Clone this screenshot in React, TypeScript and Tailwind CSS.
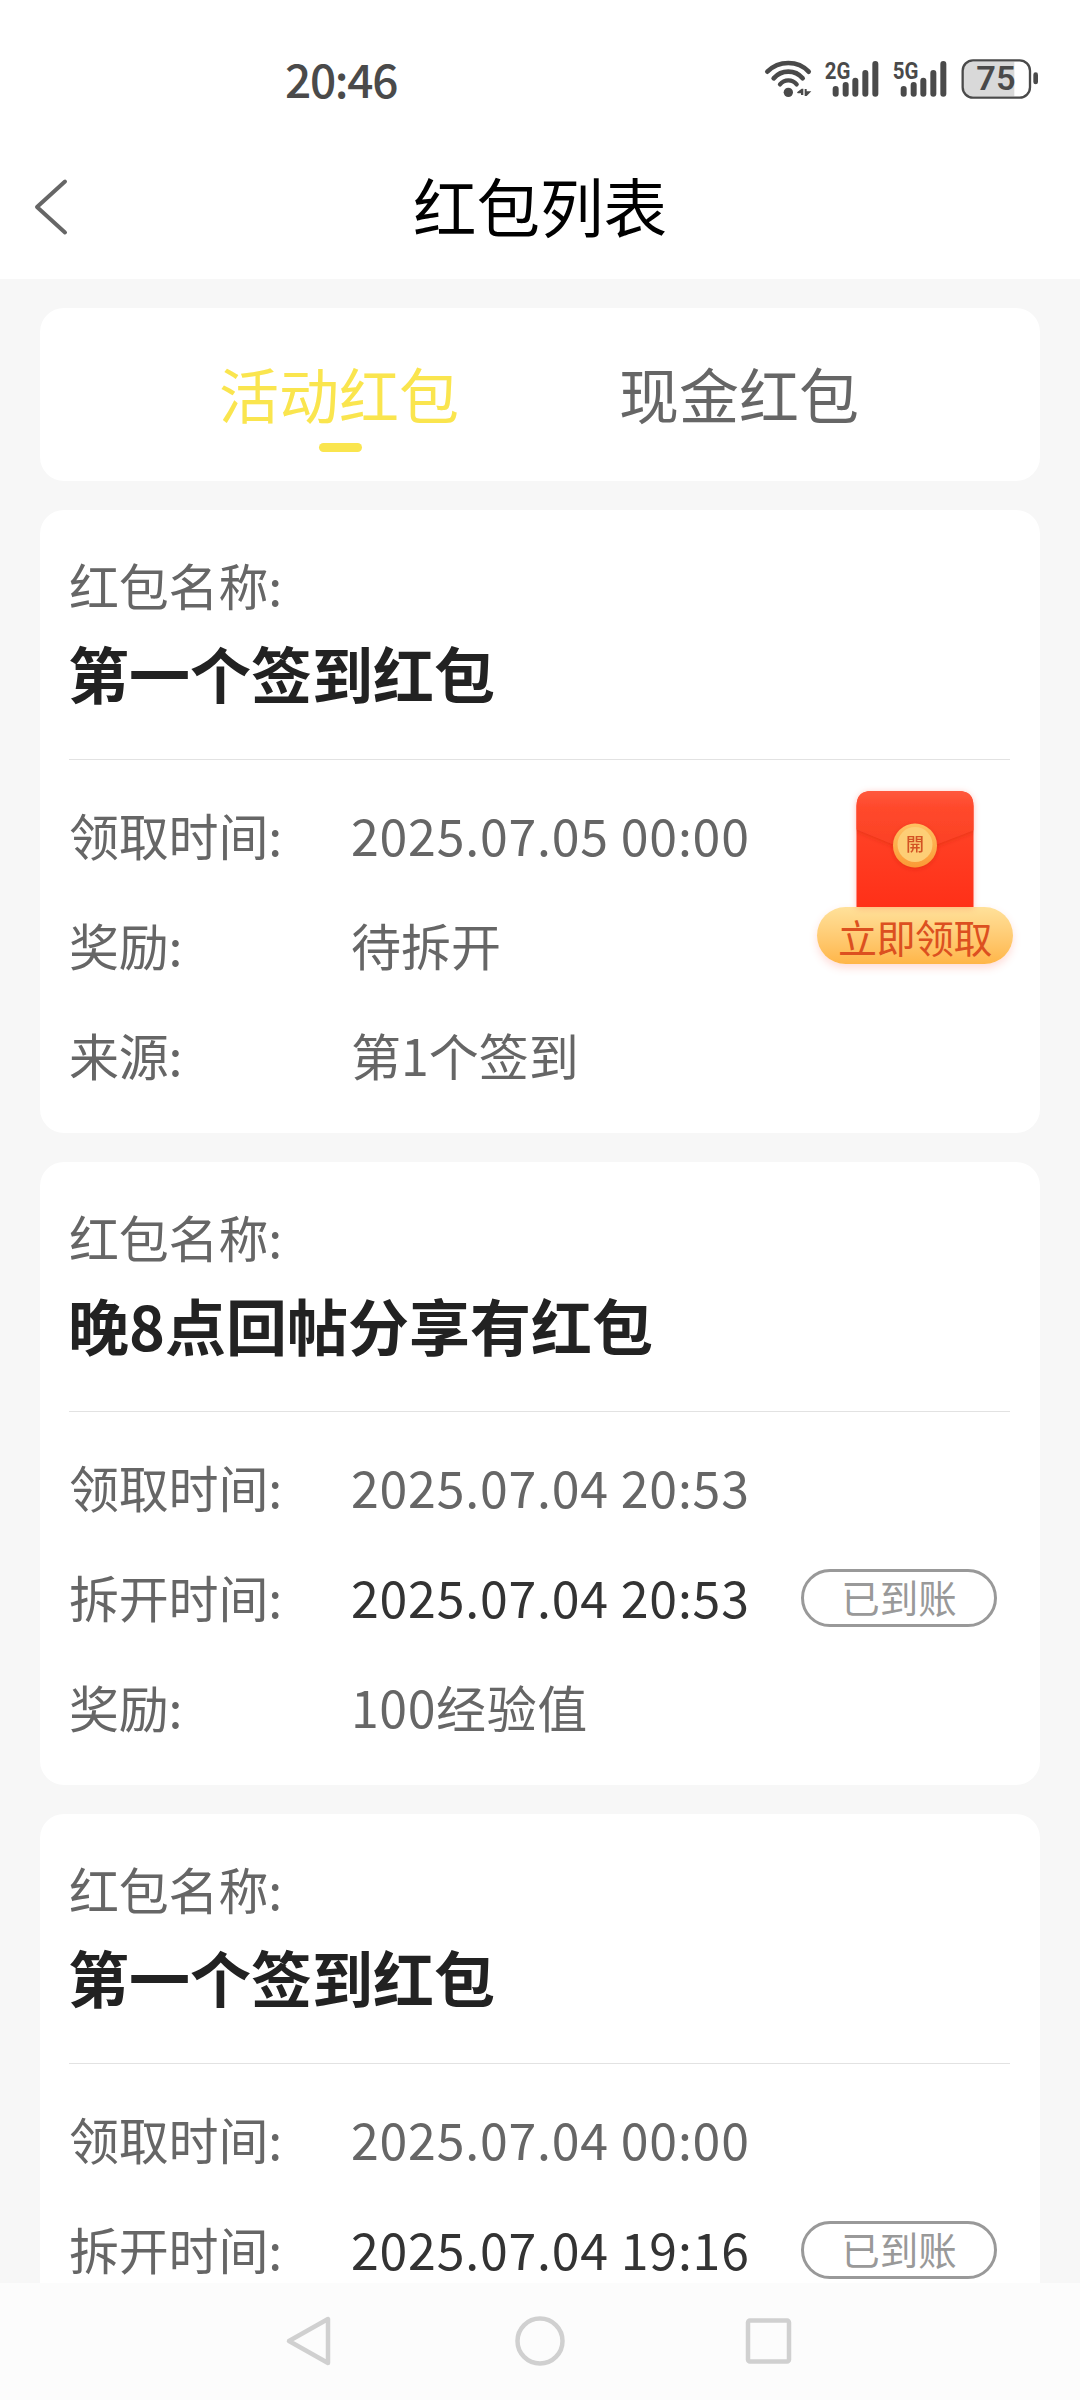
import type { ReactNode } from "react";
import clsx from "clsx";

type Row = {
  label: string;
  value: string;
  dark?: boolean;
  arrived?: boolean;
};

type Packet = {
  name: string;
  claimable?: boolean;
  rows: Row[];
};

const packets: Packet[] = [
  {
    name: "第一个签到红包",
    claimable: true,
    rows: [
      { label: "领取时间:", value: "2025.07.05 00:00" },
      { label: "奖励:", value: "待拆开" },
      { label: "来源:", value: "第1个签到" },
    ],
  },
  {
    name: "晚8点回帖分享有红包",
    rows: [
      { label: "领取时间:", value: "2025.07.04 20:53" },
      { label: "拆开时间:", value: "2025.07.04 20:53", dark: true, arrived: true },
      { label: "奖励:", value: "100经验值" },
    ],
  },
  {
    name: "第一个签到红包",
    rows: [
      { label: "领取时间:", value: "2025.07.04 00:00" },
      { label: "拆开时间:", value: "2025.07.04 19:16", dark: true, arrived: true },
    ],
  },
];

const WifiIcon = () => (
  <svg className="h-[40px] w-[48px]" viewBox="0 0 144 120" fill="none">
    <g stroke="#4a4a4a" strokeWidth="14" strokeLinecap="round">
      <path d="M10 38Q36 12 73 12Q110 12 134 38" />
      <path d="M29 58Q47 38 73 38Q99 38 116 58" />
      <path d="M48 76Q58 64 73 64Q88 64 98 76" strokeWidth="13" />
    </g>
    <circle cx="73" cy="100" r="14" fill="#4a4a4a" />
    <path d="M99 100L113 89H118V108H111V103H101Z" fill="#4a4a4a" />
    <path d="M122 90H128V97H142L128 111H122Z" fill="#4a4a4a" />
  </svg>
);

const SignalIcon = ({ type }: { type: string }) => (
  <svg className="h-[40px] w-[56px] overflow-visible" viewBox="0 0 168 120">
    <text
      x="-1"
      y="59"
      textLength="77"
      lengthAdjust="spacingAndGlyphs"
      fill="#4a4a4a"
      fontSize="72"
      fontWeight="700"
      fontFamily="Roboto, sans-serif"
    >
      {type}
    </text>
    <g stroke="#4a4a4a" strokeWidth="18" strokeLinecap="round">
      <path d="M32 90V104" />
      <path d="M62 78V104" />
      <path d="M91 65V104" />
      <path d="M121 42V104" />
      <path d="M151 15V104" />
    </g>
  </svg>
);

const BatteryIcon = () => (
  <svg className="h-[40px] w-[78px]" viewBox="0 0 234 120">
    <path d="M36 8H160V112H36Q8 112 8 84V36Q8 8 36 8Z" fill="#d9d9d9" />
    <rect x="5" y="4" width="202" height="112" rx="31" fill="none" stroke="#4a4a4a" strokeWidth="7" />
    <rect x="217" y="40" width="14" height="36" rx="7" fill="#4a4a4a" />
    <text
      x="46"
      y="94"
      textLength="118"
      lengthAdjust="spacingAndGlyphs"
      fill="#4a4a4a"
      fontSize="100"
      fontWeight="600"
      fontFamily="Roboto, sans-serif"
    >
      75
    </text>
  </svg>
);

const StatusBar = () => (
  <div className="flex h-[128px] items-start bg-white pl-[285px] pr-[41px] pt-[48px] text-[#4a4a4a]">
    <span className="h-[60px] text-[46px] font-medium leading-[60px] tracking-[-1.3px]">20:46</span>
    <div className="ml-auto mt-[11px] flex items-center">
      <WifiIcon />
      <div className="ml-[13px]">
        <SignalIcon type="2G" />
      </div>
      <div className="ml-[12px]">
        <SignalIcon type="5G" />
      </div>
      <div className="ml-[12px]">
        <BatteryIcon />
      </div>
    </div>
  </div>
);

const Header = () => (
  <header className="relative flex h-[151px] items-center justify-center bg-white">
    <svg className="absolute left-[31px] top-[48px] h-[62px] w-[40px]" viewBox="0 0 40 62" fill="none">
      <path d="M34 5.5L6 31L34 56.5" stroke="#666" strokeWidth="4" strokeLinecap="round" strokeLinejoin="round" />
    </svg>
    <h1 className="text-[63.5px] font-normal leading-[90px] text-black">红包列表</h1>
  </header>
);

const Tab = ({ active, children }: { active?: boolean; children: ReactNode }) => (
  <div className="relative flex w-[400px] justify-center pr-[2px]">
    <span
      className={clsx(
        "text-[60px] leading-[170px]",
        active ? "text-[#fae54e]" : "text-[#666]"
      )}
    >
      {children}
    </span>
    {active && (
      <span className="absolute bottom-[29px] left-[179px] h-[9px] w-[43px] rounded-full bg-[#fae54e]" />
    )}
  </div>
);

const Envelope = () => (
  <div className="absolute right-[27px] top-[280px] flex w-[196px] flex-col items-center">
    <svg className="h-[117px] w-[118px] drop-shadow-[0_1px_3px_rgba(255,60,40,0.3)]" viewBox="0 0 118 117">
      <defs>
        <linearGradient id="body" x1="0" y1="0" x2="0" y2="1">
          <stop offset="0" stopColor="#ff4a2c" />
          <stop offset="1" stopColor="#ff3018" />
        </linearGradient>
        <linearGradient id="flap" x1="0" y1="0" x2="0" y2="1">
          <stop offset="0" stopColor="#ff6247" />
          <stop offset="0.4" stopColor="#ff482b" />
          <stop offset="1" stopColor="#fb4125" />
        </linearGradient>
        <linearGradient id="coin" x1="0" y1="0" x2="0" y2="1">
          <stop offset="0" stopColor="#ffc163" />
          <stop offset="1" stopColor="#fb9a35" />
        </linearGradient>
        <filter id="soft" x="-20%" y="-20%" width="140%" height="140%">
          <feDropShadow dx="0" dy="1.5" stdDeviation="2" floodColor="#c8200c" floodOpacity="0.4" />
        </filter>
        <clipPath id="edge">
          <path d="M0.5 117V16Q0.5 1 15.5 1H102.5Q117.5 1 117.5 16V117Z" />
        </clipPath>
      </defs>
      <g clipPath="url(#edge)">
        <rect width="118" height="117" fill="url(#body)" />
        <path d="M-3 -8H121V39L82 54Q59 60 36 54L-3 38Z" fill="url(#flap)" filter="url(#soft)" />
      </g>
      <circle cx="59" cy="55.5" r="22" fill="url(#coin)" filter="url(#soft)" />
      <circle cx="59" cy="54.5" r="17.5" fill="#fdce76" />
      <text
        x="59"
        y="60.5"
        textAnchor="middle"
        fill="#d35324"
        fontSize="18"
        fontWeight="500"
        fontFamily="'Noto Sans CJK TC', sans-serif"
      >
        開
      </text>
    </svg>
    <button className="h-[57px] w-[196px] rounded-full bg-linear-to-b from-[#ffe19a] to-[#ffb648] text-[39px] leading-[56px] tracking-[-0.5px] text-[#dc5020] shadow-[0_4px_8px_rgba(255,80,60,0.2)]">
      立即领取
    </button>
  </div>
);

const PacketCard = ({ packet }: { packet: Packet }) => (
  <section className="relative h-[623px] shrink-0 rounded-[24px] bg-white px-[30px] pt-[37px]">
    <p className="-ml-[1px] h-[74px] text-[50px] leading-[74px] tracking-[-0.2px] text-[#666]">红包名称:</p>
    <h2 className="-ml-[2px] h-[101px] text-[61px] font-bold leading-[104px] text-[#222]">{packet.name}</h2>
    <div className="-ml-[1px] mb-[19px] mt-[37px] h-px bg-[#e2e2e2]" />
    {packet.rows.map((row) => (
      <div key={row.label} className="flex h-[110px] items-center text-[50px] leading-[110px] text-[#666]">
        <span className="-ml-[1px] w-[282px] tracking-[-0.2px]">{row.label}</span>
        <span
          className={clsx(
            row.dark && "text-[#333]",
            row.value.includes(":") && "tracking-[0.8px]",
            row.value.startsWith("100") && "tracking-[0.6px]"
          )}
        >
          {row.value}
        </span>
        {row.arrived && (
          <span className="ml-auto mr-[13px] mt-[4px] h-[58px] w-[196px] rounded-full border-[3px] border-[#999] text-center text-[38.5px] leading-[48px] text-[#999]">
            已到账
          </span>
        )}
      </div>
    ))}
    {packet.claimable && <Envelope />}
  </section>
);

const NavBar = () => (
  <nav className="flex h-[117px] items-start bg-[#fcfcfc] pl-[282px] pt-[30px]">
    <svg className="h-[56px] w-[54px]" viewBox="0 0 54 56" fill="none">
      <path d="M46 6V50L7 28Z" stroke="#d0d0d0" strokeWidth="4.5" strokeLinejoin="round" />
    </svg>
    <svg className="ml-[176px] h-[56px] w-[56px]" viewBox="0 0 56 56" fill="none">
      <circle cx="28" cy="28" r="22.5" stroke="#d0d0d0" strokeWidth="4.5" />
    </svg>
    <svg className="ml-[172px] h-[56px] w-[56px]" viewBox="0 0 56 56" fill="none">
      <rect x="8" y="7.5" width="41" height="41" rx="2" stroke="#d0d0d0" strokeWidth="4.5" />
    </svg>
  </nav>
);

const App = () => {
  return (
    <div className="flex h-[2400px] w-[1080px] flex-col overflow-hidden bg-[#f7f7f7] font-['Noto_Sans_CJK_SC',sans-serif]">
      <StatusBar />
      <Header />
      <main className="flex h-[2004px] flex-col gap-[29px] overflow-hidden px-[40px] pt-[29px]">
        <div className="flex h-[173px] shrink-0 justify-center rounded-[24px] bg-white">
          <Tab active>活动红包</Tab>
          <Tab>现金红包</Tab>
        </div>
        {packets.map((packet, i) => (
          <PacketCard key={i} packet={packet} />
        ))}
      </main>
      <NavBar />
    </div>
  );
};

export default App;
